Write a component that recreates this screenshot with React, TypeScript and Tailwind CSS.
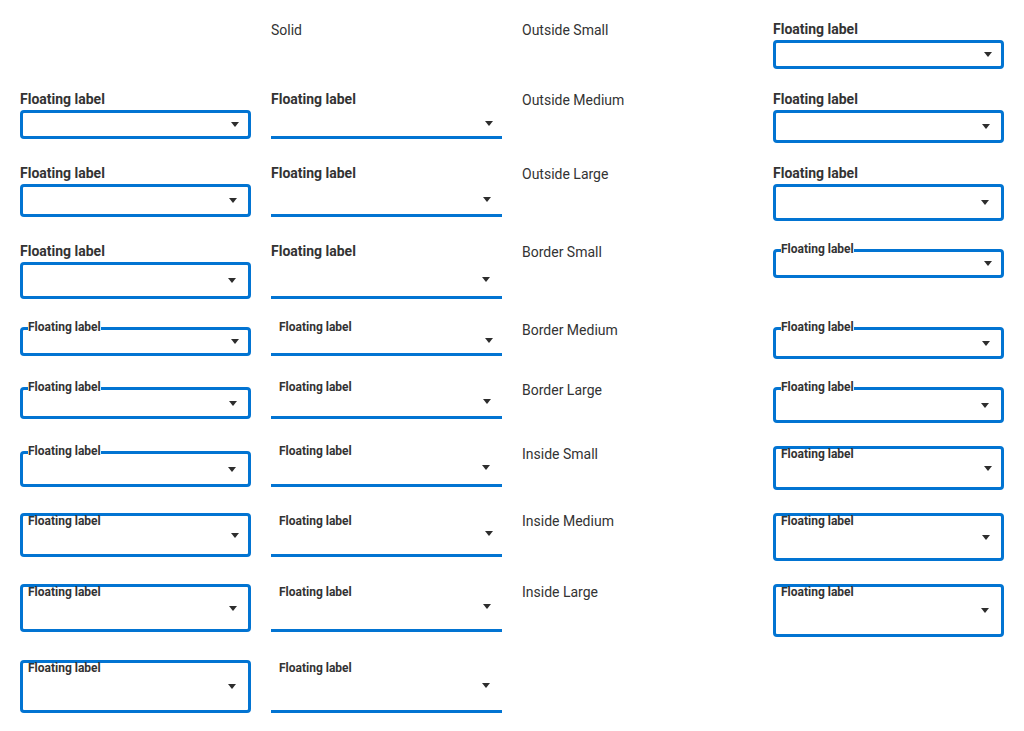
type Size = "small" | "medium" | "large";
type Pos = "outside" | "border" | "inside";

const boxHeight: Record<Pos, Record<Size, string>> = {
  outside: { small: "h-[29px]", medium: "h-[33px]", large: "h-[37px]" },
  border: { small: "h-[29px]", medium: "h-[32px]", large: "h-[36px]" },
  inside: { small: "h-[44px]", medium: "h-[48px]", large: "h-[53px]" },
};

const arrowPad: Record<Size, string> = {
  small: "pr-[9px]",
  medium: "pr-[11px]",
  large: "pr-[12px]",
};

function Caret() {
  return (
    <svg width="8" height="5" viewBox="0 0 8 5" className="shrink-0">
      <polygon points="0,0 8,0 4,5" fill="#2d2d2d" />
    </svg>
  );
}

function Select({ pos, size, solid }: { pos: Pos; size: Size; solid?: boolean }) {
  const frame = solid
    ? "border-b-[3px] border-[#0274d2]"
    : "border-[3px] border-[#0274d2] rounded-[4px]";

  // label offsets differ because the solid frame has no top/left border
  const borderLabel = solid ? "top-[-8px] left-[8px]" : "top-[-11px] left-[5px]";
  const insideLabel = solid ? "top-0 left-[8px]" : "top-[-3px] left-[5px]";

  return (
    <div className="flex flex-col w-full">
      {pos === "outside" && (
        <div className="h-[21px] text-[14px] leading-[21px] font-bold text-[#333]">Floating label</div>
      )}
      <div
        className={
          "relative flex items-center justify-end bg-white " +
          frame +
          " " +
          boxHeight[pos][size] +
          " " +
          arrowPad[size] +
          (pos === "border" ? " mt-[8px]" : "") +
          (pos === "inside" ? " mt-[3px]" : "")
        }
      >
        {pos === "border" && (
          <span
            className={
              "absolute bg-white text-[12px] leading-[16px] font-bold text-[#333] " + borderLabel
            }
          >
            Floating label
          </span>
        )}
        {pos === "inside" && (
          <span className={"absolute text-[12px] leading-[16px] font-bold text-[#333] " + insideLabel}>
            Floating label
          </span>
        )}
        <Caret />
      </div>
    </div>
  );
}

function Caption({ children }: { children: string }) {
  return <div className="text-[14px] leading-[21px] text-[#333] pt-px">{children}</div>;
}

const rows: { pos: Pos; size: Size; name: string }[] = [
  { pos: "outside", size: "small", name: "Outside Small" },
  { pos: "outside", size: "medium", name: "Outside Medium" },
  { pos: "outside", size: "large", name: "Outside Large" },
  { pos: "border", size: "small", name: "Border Small" },
  { pos: "border", size: "medium", name: "Border Medium" },
  { pos: "border", size: "large", name: "Border Large" },
  { pos: "inside", size: "small", name: "Inside Small" },
  { pos: "inside", size: "medium", name: "Inside Medium" },
  { pos: "inside", size: "large", name: "Inside Large" },
];

export default function App() {
  const cells: React.ReactNode[] = [];
  cells.push(<div key="blank" />);
  cells.push(<Caption key="solid">Solid</Caption>);
  rows.forEach((r, i) => {
    cells.push(<Caption key={"n" + i}>{r.name}</Caption>);
    cells.push(<Select key={"c4" + i} pos={r.pos} size={r.size} />);
    cells.push(<Select key={"c1" + i} pos={r.pos} size={r.size} />);
    cells.push(<Select key={"c2" + i} pos={r.pos} size={r.size} solid />);
  });

  return (
    <div
      className="min-h-screen bg-white pt-[19px] px-[20px]"
      style={{ fontFamily: "Roboto, 'Liberation Sans', sans-serif" }}
    >
      <div className="grid grid-cols-[repeat(4,231px)] gap-x-[20px] gap-y-[20px] items-start">
        {cells}
      </div>
    </div>
  );
}
